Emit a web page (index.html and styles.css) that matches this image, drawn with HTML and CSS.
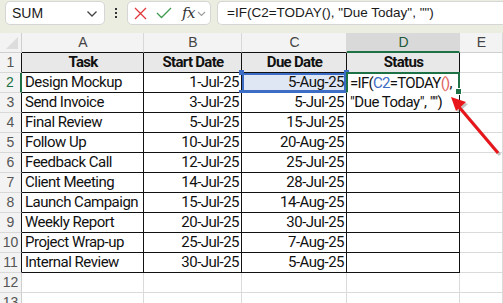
FILE: index.html
```html
<!DOCTYPE html>
<html>
<head>
<meta charset="utf-8">
<link rel="stylesheet" href="styles.css">
</head>
<body>
<div class="fbar">
  <div class="namebox">
    <span class="nb-text">SUM</span>
    <svg class="chev" width="12" height="8" viewBox="0 0 12 8"><path d="M1.5 1.5 L6 6 L10.5 1.5" fill="none" stroke="#444" stroke-width="1.3"/></svg>
  </div>
  <div class="dots"><i></i><i></i><i></i></div>
  <div class="btns">
    <svg class="ic-x" width="13" height="13" viewBox="0 0 13 13"><path d="M1 1 L12 12 M12 1 L1 12" stroke="#e0383a" stroke-width="1.3" fill="none"/></svg>
    <svg class="ic-ok" width="16" height="12" viewBox="0 0 16 12"><path d="M1 6 L5.5 10.5 L15 1" stroke="#3f9a4f" stroke-width="1.3" fill="none"/></svg>
    <span class="fx">fx</span>
    <svg class="chev2" width="9" height="6" viewBox="0 0 9 6"><path d="M1 1 L4.5 4.5 L8 1" fill="none" stroke="#9a9a9a" stroke-width="1.1"/></svg>
  </div>
  <div class="finput">=IF(C2=TODAY(), "Due Today", "")</div>
</div>
<div class="sheet">
  <div class="c corner"><span class="tri"></span></div>
  <div class="c ch tb">A</div>
  <div class="c ch tb">B</div>
  <div class="c ch tb">C</div>
  <div class="c ch tb sel">D</div>
  <div class="c ch">E</div>

  <div class="c rh tl">1</div>
  <div class="c t hd">Task</div>
  <div class="c t hd">Start Date</div>
  <div class="c t hd">Due Date</div>
  <div class="c t hd">Status</div>
  <div class="c"></div>

  <div class="c rh tl rsel">2</div>
  <div class="c t">Design Mockup</div>
  <div class="c t r">1-Jul-25</div>
  <div class="c t r ref">5-Aug-25<span class="q q1"></span><span class="q q2"></span><span class="q q3"></span><span class="q q4"></span></div>
  <div class="c t edit">=IF(<span class="blue">C2</span>=TODAY<span class="pink">()</span>,<span class="hnd"></span></div>
  <div class="c"></div>

  <div class="c rh tl">3</div>
  <div class="c t">Send Invoice</div>
  <div class="c t r">3-Jul-25</div>
  <div class="c t r">5-Jul-25</div>
  <div class="c t">"Due Today", "")</div>
  <div class="c"></div>

  <div class="c rh tl">4</div>
  <div class="c t">Final Review</div>
  <div class="c t r">5-Jul-25</div>
  <div class="c t r">15-Jul-25</div>
  <div class="c t"></div>
  <div class="c"></div>

  <div class="c rh tl">5</div>
  <div class="c t">Follow Up</div>
  <div class="c t r">10-Jul-25</div>
  <div class="c t r">20-Aug-25</div>
  <div class="c t"></div>
  <div class="c"></div>

  <div class="c rh tl">6</div>
  <div class="c t">Feedback Call</div>
  <div class="c t r">12-Jul-25</div>
  <div class="c t r">25-Jul-25</div>
  <div class="c t"></div>
  <div class="c"></div>

  <div class="c rh tl">7</div>
  <div class="c t">Client Meeting</div>
  <div class="c t r">14-Jul-25</div>
  <div class="c t r">28-Jul-25</div>
  <div class="c t"></div>
  <div class="c"></div>

  <div class="c rh tl">8</div>
  <div class="c t">Launch Campaign</div>
  <div class="c t r">15-Jul-25</div>
  <div class="c t r">14-Aug-25</div>
  <div class="c t"></div>
  <div class="c"></div>

  <div class="c rh tl">9</div>
  <div class="c t">Weekly Report</div>
  <div class="c t r">20-Jul-25</div>
  <div class="c t r">30-Jul-25</div>
  <div class="c t"></div>
  <div class="c"></div>

  <div class="c rh tl">10</div>
  <div class="c t">Project Wrap-up</div>
  <div class="c t r">25-Jul-25</div>
  <div class="c t r">7-Aug-25</div>
  <div class="c t"></div>
  <div class="c"></div>

  <div class="c rh tl">11</div>
  <div class="c t">Internal Review</div>
  <div class="c t r">30-Jul-25</div>
  <div class="c t r">5-Aug-25</div>
  <div class="c t"></div>
  <div class="c"></div>

  <div class="c rh">12</div>
  <div class="c"></div><div class="c"></div><div class="c"></div><div class="c"></div><div class="c"></div>
  <div class="c rh">13</div>
  <div class="c"></div><div class="c"></div><div class="c"></div><div class="c"></div><div class="c"></div>
</div>
<svg class="arrow" width="70" height="70" viewBox="0 0 70 70">
  <g transform="translate(2,2)" opacity="0.35">
    <path d="M51 60 L12 14" stroke="#555" stroke-width="3" fill="none"/>
    <path d="M4 4 L19 9 L9 18 Z" fill="#555"/>
  </g>
  <path d="M51 60 L12 14" stroke="#e8161b" stroke-width="3" fill="none"/>
  <path d="M4 4 L19 9 L9 18 Z" fill="#e8161b"/>
</svg>
</body>
</html>
```
FILE: styles.css
```css
* { box-sizing: border-box; }
html, body { margin: 0; padding: 0; }
body {
  width: 503px;
  height: 303px;
  overflow: hidden;
  background: #eaeddf;
  font-family: "Roboto", "Liberation Sans", sans-serif;
  position: relative;
}
.fbar {
  height: 33px;
  display: flex;
  align-items: flex-start;
  padding: 1px 0 0 5px;
}
.namebox {
  width: 100px;
  height: 24px;
  background: #fff;
  border: 1px solid #d6d6d6;
  border-radius: 5px;
  display: flex;
  align-items: center;
  justify-content: space-between;
  padding: 0 6px 0 6px;
}
.nb-text {
  font-family: "Liberation Sans", sans-serif;
  font-size: 14px;
  color: #1a1a1a;
}
.chev { margin-top: 2px; }
.dots {
  width: 22px;
  height: 24px;
  display: flex;
  flex-direction: column;
  align-items: center;
  justify-content: center;
  gap: 2px;
}
.dots i {
  display: block;
  width: 2px;
  height: 2px;
  background: #333;
}
.btns {
  width: 84px;
  height: 24px;
  background: #fff;
  border: 1px solid #d6d6d6;
  border-radius: 5px;
  display: flex;
  align-items: center;
  padding-left: 6px;
}
.ic-x { margin-right: 9px; }
.ic-ok { margin-right: 10px; }
.fx {
  font-family: "DejaVu Serif", "Liberation Serif", serif;
  font-style: italic;
  font-size: 15px;
  color: #333;
  margin-right: 2px;
  letter-spacing: -0.5px;
}
.chev2 { margin-top: 2px; }
.finput {
  flex: 1;
  height: 24px;
  margin-left: 6px;
  background: #fff;
  border: 1px solid #d6d6d6;
  border-right: none;
  border-radius: 5px 0 0 5px;
  font-family: "Liberation Sans", sans-serif;
  font-size: 13.5px;
  color: #1a1a1a;
  line-height: 22px;
  padding-left: 9px;
  white-space: nowrap;
}
.sheet {
  display: grid;
  grid-template-columns: 22px 122px 98px 105px 113px 43px;
  grid-auto-rows: 20px;
  background: #fff;
}
.c {
  border-right: 1px solid #dadada;
  border-bottom: 1px solid #dadada;
  background: #fff;
  font-size: 15px;
  letter-spacing: -0.5px;
  line-height: 19px;
  padding: 0 2px 0 3px;
  white-space: nowrap;
  overflow: visible;
  color: #111;
  position: relative;
}
.corner {
  background: #f3f3f3;
  border-right-color: #cfcfcf;
  border-bottom-color: #cfcfcf;
}
.tri {
  position: absolute;
  right: 3px;
  bottom: 3px;
  width: 0;
  height: 0;
  border-left: 12px solid transparent;
  border-bottom: 12px solid #dcdcdc;
}
.ch {
  background: #f3f3f3;
  text-align: center;
  color: #444;
  font-family: "Liberation Sans", sans-serif;
  font-size: 14px;
  letter-spacing: 0;
  border-right-color: #d8d8d8;
  border-bottom-color: #cfcfcf;
}
.ch.tb { border-bottom-color: #111; }
.ch.sel {
  background: #d9d9d9;
  border-bottom: 2px solid #1e7145;
  color: #1e5a3a;
}
.rh {
  background: #f3f3f3;
  text-align: center;
  color: #555;
  font-family: "Liberation Sans", sans-serif;
  font-size: 14px;
  letter-spacing: 0;
  padding: 0;
  border-right-color: #cfcfcf;
  border-bottom-color: #d8d8d8;
}
.rh.tl { border-right-color: #111; }
.rh.rsel {
  color: #1e7145;
  border-right: 2px solid #1e7145;
}
.t {
  border-right-color: #111;
  border-bottom-color: #111;
}
.hd {
  background: #e8e8e8;
  font-weight: bold;
  letter-spacing: -0.7px;
  text-align: center;
}
.r { text-align: right; }
.ref {
  background: #dfe7f4;
  box-shadow: inset 0 0 0 2px #3c6cc4;
  border-color: #3c6cc4;
}
.q {
  position: absolute;
  width: 5px;
  height: 5px;
  background: #3c6cc4;
}
.q1 { left: -3px; top: -3px; }
.q2 { right: -3px; top: -3px; }
.q3 { left: -3px; bottom: -3px; }
.q4 { right: -3px; bottom: -3px; }
.edit {
  border-top: 2px solid #1e7145;
  border-left: 2px solid #1e7145;
  border-right: 2px solid #1e7145;
  border-bottom-color: #fff;
  margin-top: -1px;
  margin-left: -1px;
  padding-left: 2px;
  line-height: 18px;
  letter-spacing: -0.7px;
  z-index: 1;
}
.blue { color: #3c6cc4; }
.pink { color: #e06464; }
.hnd {
  position: absolute;
  right: -4px;
  bottom: -3px;
  width: 5px;
  height: 5px;
  background: #1e7145;
  border: 1px solid #fff;
  box-sizing: content-box;
}
.arrow {
  position: absolute;
  left: 447px;
  top: 93px;
}
```
